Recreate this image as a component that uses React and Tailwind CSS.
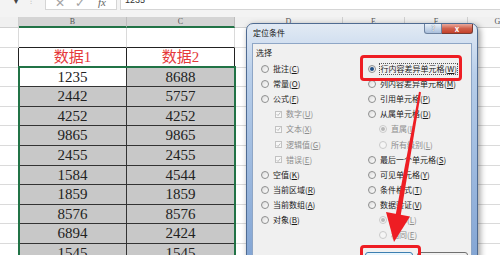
import React from 'react';

// sheet data, columns B and C
const data = [
  ['1235', '8688'],
  ['2442', '5757'],
  ['4252', '4252'],
  ['9865', '9865'],
  ['2455', '2455'],
  ['1584', '4544'],
  ['1859', '1859'],
  ['8576', '8576'],
  ['6894', '2424'],
  ['1545', '1545'],
];

const leftOptions = [
  { type: 'radio', label: '批注', key: 'C' },
  { type: 'radio', label: '常量', key: 'O' },
  { type: 'radio', label: '公式', key: 'F' },
  { type: 'check', label: '数字', key: 'U' },
  { type: 'check', label: '文本', key: 'X' },
  { type: 'check', label: '逻辑值', key: 'G' },
  { type: 'check', label: '错误', key: 'E' },
  { type: 'radio', label: '空值', key: 'K' },
  { type: 'radio', label: '当前区域', key: 'R' },
  { type: 'radio', label: '当前数组', key: 'A' },
  { type: 'radio', label: '对象', key: 'B' },
];

const rightOptions = [
  { type: 'radio', label: '行内容差异单元格', key: 'W', checked: true, focus: true },
  { type: 'radio', label: '列内容差异单元格', key: 'M' },
  { type: 'radio', label: '引用单元格', key: 'P' },
  { type: 'radio', label: '从属单元格', key: 'D' },
  { type: 'radio', label: '直属', key: 'I', indent: true, disabled: true, checked: true },
  { type: 'radio', label: '所有级别', key: 'L', indent: true, disabled: true },
  { type: 'radio', label: '最后一个单元格', key: 'S' },
  { type: 'radio', label: '可见单元格', key: 'Y' },
  { type: 'radio', label: '条件格式', key: 'T' },
  { type: 'radio', label: '数据验证', key: 'V' },
  { type: 'radio', label: '全部', key: 'L', indent: true, disabled: true, checked: true },
  { type: 'radio', label: '相同', key: 'E', indent: true, disabled: true },
];

const Radio = ({ checked, disabled }) => (
  <span
    className={`flex items-center justify-center shrink-0 w-[8px] h-[8px] rounded-full border ${
      disabled ? 'border-[#cacaca] bg-[#f5f5f5]' : 'border-[#8e8f8f] bg-linear-to-br from-[#dcdcdc] to-[#ffffff]'
    }`}
  >
    {checked && (
      <span className={`w-[4px] h-[4px] rounded-full ${disabled ? 'bg-[#b8b8b8]' : 'bg-[#1f4f86]'}`} />
    )}
  </span>
);

const Check = () => (
  <span className="flex items-center justify-center shrink-0 w-[7px] h-[7px] border border-[#c2c2c2] bg-[#f7f7f7]">
    <svg width="6" height="6" viewBox="0 0 6 6">
      <path d="M0.8 3.2 L2.4 4.8 L5.2 1.2" fill="none" stroke="#a9a9a9" strokeWidth="0.9" />
    </svg>
  </span>
);

const Option = ({ opt }) => {
  const grey = opt.disabled || opt.type === 'check';
  return (
    <div
      className={`flex items-center h-[15.1px] ${opt.indent ? 'pl-[11px]' : ''} ${
        opt.type === 'check' ? 'pl-[14px]' : ''
      }`}
    >
      {opt.type === 'check' ? <Check /> : <Radio checked={opt.checked} disabled={opt.disabled} />}
      <span
        className={`ml-[4px] text-[8px] leading-[10px] whitespace-nowrap ${grey ? 'text-[#8d8d8d]' : 'text-[#1a1a1a]'} ${
          opt.focus ? 'outline outline-1 outline-dotted outline-[#555] px-[0.5px]' : ''
        }`}
      >
        {opt.label}(<span className="underline">{opt.key}</span>)
      </span>
    </div>
  );
};

const FormulaBar = () => (
  <div className="flex h-[17px] bg-[#f3f3f3]">
    <div className="w-[45px] flex items-start">
      <span className="ml-[14px] -mt-[4px] text-[8px] text-[#444]">▾</span>
      <span className="ml-[12px] -mt-[4px] text-[8px] text-[#bbb]">⁝</span>
    </div>
    <div className="w-[72px] h-[10px] bg-white border-x border-b border-[#d5d5d5] flex items-start overflow-hidden text-[#a3a3a3]">
      <span className="ml-[9px] -mt-[6px] text-[12px]">✕</span>
      <span className="ml-[10px] -mt-[6px] text-[12px]">✓</span>
      <span className="ml-[13px] -mt-[6px] text-[11px] italic font-['Liberation_Serif',serif] text-[#666]">fx</span>
    </div>
    <div className="ml-[3px] flex-1 h-[10px] bg-white border-l border-b border-[#d5d5d5] overflow-hidden">
      <span className="block ml-[4px] -mt-[5px] text-[9px] leading-[10px] text-[#333]">1235</span>
    </div>
  </div>
);

const otherCols = [
  { key: 'D', w: 'w-[108px]' },
  { key: 'E', w: 'w-[62px]' },
  { key: 'F', w: 'w-[63px]' },
  { key: 'G', w: 'w-[60px]' },
];

const HeaderRow = () => (
  <div className="flex h-[11px] text-[8px] leading-[10px] text-[#555]">
    <div className="w-[19px] shrink-0 bg-[#f0f0f0] border-r border-b border-[#cfcfcf]" />
    <div className="w-[108px] shrink-0 bg-[#d4d4d4] border-r border-[#bdbdbd] border-b-2 border-b-[#217346] text-center">B</div>
    <div className="w-[108px] shrink-0 bg-[#d4d4d4] border-r border-[#bdbdbd] border-b-2 border-b-[#217346] text-center">C</div>
    {otherCols.map((c) => (
      <div key={c.key} className={`${c.w} shrink-0 bg-[#f0f0f0] border-r border-b border-[#cfcfcf] text-center`}>
        {c.key}
      </div>
    ))}
  </div>
);

const GridFill = () =>
  otherCols.map((c) => <div key={c.key} className={`${c.w} shrink-0 border-r border-b border-[#dadada]`} />);

const Sheet = () => (
  <div className="font-['Liberation_Serif','Noto_Sans_CJK_SC',serif]">
    <HeaderRow />
    {/* row 1 */}
    <div className="flex h-[20px]">
      <div className="w-[19px] shrink-0 border-r border-b border-[#dadada]" />
      <div className="w-[108px] shrink-0 border-r border-[#dadada] border-b border-b-[#222]" />
      <div className="w-[108px] shrink-0 border-r border-[#dadada] border-b border-b-[#222]" />
      <GridFill />
    </div>
    {/* header row */}
    <div className="flex h-[19.6px] text-[15px] text-[#e5393a]">
      <div className="w-[19px] shrink-0 border-r border-r-[#222] border-b border-b-[#dadada]" />
      <div className="w-[108px] shrink-0 border-r border-b border-[#222] flex items-center justify-center">数据1</div>
      <div className="w-[108px] shrink-0 border-r border-b border-[#222] flex items-center justify-center">数据2</div>
      <GridFill />
    </div>
    {data.map(([b, c], i) => (
      <div key={i} className="flex h-[19.6px] text-[15px] text-[#222]">
        <div className="w-[19px] shrink-0 border-r border-r-[#222] border-b border-b-[#dadada]" />
        <div
          className={`w-[108px] shrink-0 border-r border-b border-[#333] flex items-center justify-center ${
            i === 0 ? 'bg-white' : 'bg-[#c8c8c8]'
          }`}
        >
          {b}
        </div>
        <div className="w-[108px] shrink-0 border-r border-b border-[#333] bg-[#c8c8c8] flex items-center justify-center">
          {c}
        </div>
        <GridFill />
      </div>
    ))}
  </div>
);

const Dialog = () => (
  <div className="absolute left-[246px] top-[23px] w-[232px] h-[250px] flex flex-col rounded-t-[7px] border border-[#4f6b92] bg-linear-to-b from-[#e2eaf4] via-[#b9cfea] via-20% to-[#7fa2d2] shadow-[2px_2px_6px_rgba(0,0,0,0.4)] font-['Noto_Sans_CJK_SC',sans-serif]">
    <div className="flex h-[19px] shrink-0">
      <span className="pl-[6px] pt-[4px] text-[8px] leading-[10px] text-[#111]">定位条件</span>
      <div className="ml-auto mr-[4px] flex h-[10px]">
        <div className="w-[18px] flex items-center justify-center rounded-bl-[3px] border border-t-0 border-[#6d82a0] bg-linear-to-b from-[#e9f0f8] to-[#a9bfdc] text-[7px] leading-none font-bold text-white [text-shadow:0_0_1px_#334]">
          ?
        </div>
        <div className="w-[31px] flex items-center justify-center rounded-br-[3px] border border-t-0 border-l-0 border-[#7a3c33] bg-linear-to-b from-[#e9a99c] via-[#d0604b] to-[#c4412a] text-[8px] leading-none font-bold text-white">
          x
        </div>
      </div>
    </div>
    <div className="flex-1 mx-[5px] border border-[#8ea6c6] bg-[#f0f0f0]">
      <div className="pl-[3px] pt-[3px] h-[15px] text-[8px] leading-[12px] text-[#1a1a1a]">选择</div>
      <div className="flex pl-[8px] mt-[2.5px]">
        <div className="w-[107px] shrink-0">
          {leftOptions.map((o) => (
            <Option key={o.label} opt={o} />
          ))}
        </div>
        <div>
          {rightOptions.map((o) => (
            <Option key={o.label} opt={o} />
          ))}
        </div>
      </div>
      <div className="flex gap-[4px] pl-[112px] mt-[9px]">
        <div className="w-[48px] h-[20px] rounded-[3px] border border-[#3c7fb1] bg-linear-to-b from-[#eaf6fd] to-[#bee6fd] flex items-center justify-center text-[8px]">
          确定
        </div>
        <div className="w-[51px] h-[20px] rounded-[3px] border border-[#707070] bg-linear-to-b from-[#f2f2f2] to-[#dcdcdc] flex items-center justify-center text-[8px]">
          取消
        </div>
      </div>
    </div>
  </div>
);

const Annotations = () => (
  <>
    <div className="absolute left-[360px] top-[55px] w-[102px] h-[26px] border-[3px] border-[#ee1d23] rounded-[4px]" />
    <div className="absolute left-[360px] top-[245px] w-[61px] h-[20px] border-[3px] border-[#ee1d23] rounded-[4px]" />
    <svg className="absolute left-0 top-0 pointer-events-none" width="500" height="255" viewBox="0 0 500 255">
      <polygon points="419,91.8 421,92.2 400.5,216.4 395.5,215.6" fill="#ee1d23" />
      <polygon points="386,212 410,216.5 394,242" fill="#ee1d23" />
    </svg>
  </>
);

export default function App() {
  return (
    <div className="relative w-[500px] h-[255px] overflow-hidden bg-white font-['Liberation_Sans',sans-serif]">
      <FormulaBar />
      <Sheet />
      {/* green selection frame over B3:C */}
      <div className="absolute left-[18px] top-[66px] w-[218px] h-[200px] border-2 border-[#217346] pointer-events-none" />
      <Dialog />
      <Annotations />
    </div>
  );
}
